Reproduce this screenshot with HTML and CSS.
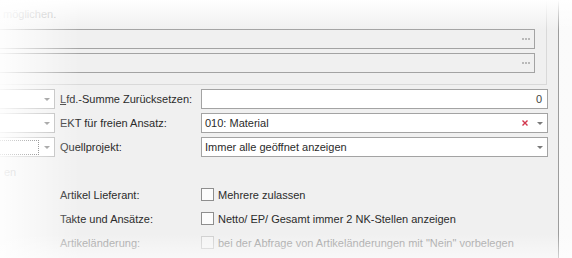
FILE: index.html
```html
<!DOCTYPE html>
<html lang="de">
<head>
  <meta charset="UTF-8" />
  <title>Einstellungen</title>
  <link rel="stylesheet" href="styles.css">
</head>
<body>
  <div class="screen">
    <div class="window">
      <div class="group">
        <div class="hint">möglichen.</div>
        <div class="picker"><span class="dots"><i></i><i></i><i></i></span></div>
        <div class="picker"><span class="dots"><i></i><i></i><i></i></span></div>
      </div>

      <div class="rows">
        <div class="row">
          <div class="combo"><span class="arrow"></span></div>
          <label class="label"><u>L</u>fd.-Summe Zurücksetzen:</label>
          <div class="field number">0</div>
        </div>
        <div class="row">
          <div class="combo"><span class="arrow"></span></div>
          <label class="label">EKT für freien Ansatz:</label>
          <div class="field">
            <span class="value">010: Material</span>
            <svg class="clear" width="6" height="6" viewBox="0 0 6 6"><path d="M0.5 0.5 L5.5 5.5 M5.5 0.5 L0.5 5.5" stroke="#d2364c" stroke-width="1.4"/></svg>
            <span class="arrow"></span>
          </div>
        </div>
        <div class="row">
          <div class="combo"><span class="focus"></span><span class="arrow"></span></div>
          <label class="label">Quellprojekt:</label>
          <div class="field">
            <span class="value">Immer alle geöffnet anzeigen</span>
            <span class="arrow"></span>
          </div>
        </div>
      </div>

      <div class="heading">en</div>

      <div class="checks">
        <div class="check-row">
          <span class="label">Artikel Lieferant:</span>
          <span class="box"></span>
          <span>Mehrere zulassen</span>
        </div>
        <div class="check-row">
          <span class="label">Takte und Ansätze:</span>
          <span class="box"></span>
          <span>Netto/ EP/ Gesamt immer 2 NK-Stellen anzeigen</span>
        </div>
        <div class="check-row disabled">
          <span class="label">Artikeländerung:</span>
          <span class="box"></span>
          <span>bei der Abfrage von Artikeländerungen mit "Nein" vorbelegen</span>
        </div>
      </div>
    </div>

    <div class="fade fade-left"></div>
    <div class="fade fade-top"></div>
    <div class="fade fade-bottom"></div>
  </div>
</body>
</html>
```

FILE: styles.css
```css
body {
  margin: 0;
  background: #f7f7f7;
  font-family: "Liberation Sans", Arial, sans-serif;
  font-size: 11px;
  color: #2b2b2b;
}

.screen {
  position: relative;
  width: 572px;
  height: 258px;
  overflow: hidden;
  background: linear-gradient(to right, #f3f3f3, #fbfbfb);
}

.window {
  width: 558px;
  height: 258px;
  background: #f0f0f0;
  border-right: 1px solid #9c9c9c;
}

.group {
  width: 535px;
  padding: 0 11px 11px 0;
  border-right: 1px solid #d9d9d9;
  border-bottom: 1px solid #d9d9d9;
}

.hint {
  height: 29px;
  line-height: 28px;
  padding-left: 3px;
  color: #8a8a8a;
}

.picker {
  height: 18px;
  border: 1px solid #a3a3a3;
  border-left: none;
  display: flex;
  justify-content: flex-end;
  align-items: center;
}

.picker + .picker {
  margin-top: 4px;
}

.dots {
  display: flex;
  gap: 1px;
  margin-right: 4px;
}

.dots i {
  width: 2px;
  height: 2px;
  background: #b9b9b9;
}

.rows {
  display: flex;
  flex-direction: column;
  gap: 4px;
  margin-top: 4px;
}

.row {
  display: flex;
  align-items: center;
  height: 20px;
}

.combo {
  width: 54px;
  height: 18px;
  border: 1px solid #b5b5b5;
  border-left: none;
  background: #fff;
  display: flex;
  align-items: center;
  justify-content: flex-end;
  position: relative;
}

.combo .arrow {
  margin-right: 4px;
}

.focus {
  position: absolute;
  left: 0;
  top: 2px;
  width: 38px;
  height: 13px;
  border: 1px dotted #444;
  border-left: none;
}

.label {
  width: 141px;
  padding-left: 5px;
}

.field {
  width: 347px;
  height: 20px;
  border: 1px solid #a3a3a3;
  background: #fff;
  display: flex;
  align-items: center;
  padding: 0 4px 0 3px;
  box-sizing: border-box;
}

.field.number {
  justify-content: flex-end;
  padding-right: 5px;
  color: #444;
}

.value {
  flex: 1;
}

.clear {
  margin-right: 9px;
}

.arrow {
  width: 0;
  height: 0;
  border-left: 3px solid transparent;
  border-right: 3px solid transparent;
  border-top: 3px solid #7a7a7a;
}

.heading {
  margin-top: 7px;
  height: 16px;
  line-height: 16px;
  padding-left: 4px;
  color: #9a9a9a;
}

.checks {
  display: flex;
  flex-direction: column;
  gap: 3px;
  margin-top: 4px;
}

.check-row {
  display: flex;
  align-items: center;
  height: 21px;
}

.check-row .label {
  width: 141px;
  padding-left: 60px;
}

.box {
  width: 11px;
  height: 11px;
  border: 1px solid #8e8e8e;
  background: #fcfcfc;
  margin-right: 4px;
}

.disabled {
  color: #a0a0a0;
}

.disabled .box {
  border-color: #cfcfcf;
  background: #f4f4f4;
}

.fade {
  position: absolute;
  pointer-events: none;
}

.fade-left {
  left: 0;
  top: 0;
  width: 80px;
  height: 258px;
  background: linear-gradient(to right, rgba(255, 255, 255, 0.9), rgba(255, 255, 255, 0));
}

.fade-top {
  left: 0;
  top: 0;
  width: 572px;
  height: 30px;
  background: linear-gradient(to bottom, rgba(255, 255, 255, 1), rgba(255, 255, 255, 0));
}

.fade-bottom {
  left: 0;
  bottom: 0;
  width: 572px;
  height: 24px;
  background: linear-gradient(to top, rgba(255, 255, 255, 0.55), rgba(255, 255, 255, 0));
}
```
